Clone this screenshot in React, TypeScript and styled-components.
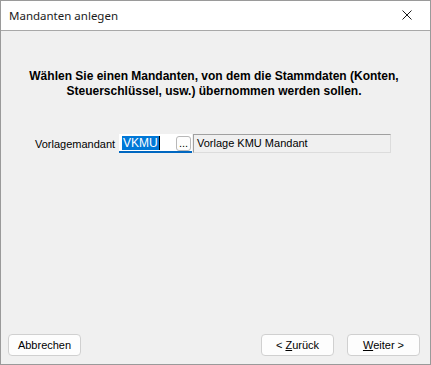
import React from "react";
import styled, { createGlobalStyle } from "styled-components";

const GlobalStyle = createGlobalStyle`
  html, body {
    margin: 0;
    padding: 0;
    background: #ffffff;
  }
  * {
    box-sizing: border-box;
  }
`;

function App() {
  return (
    <>
      <GlobalStyle />
      <Window>
        <TitleBar>
          <Title>Mandanten anlegen</Title>
          <CloseButton aria-label="Schließen">
            <svg width="10" height="10" viewBox="0 0 10 10">
              <path d="M0.5 0.5 L9.5 9.5 M9.5 0.5 L0.5 9.5" stroke="#1a1a1a" strokeWidth="1" />
            </svg>
          </CloseButton>
        </TitleBar>
        <Body>
          <Heading>
            Wählen Sie einen Mandanten, von dem die Stammdaten (Konten,
            <br />
            Steuerschlüssel, usw.) übernommen werden sollen.
          </Heading>
          <FieldRow>
            <Label>Vorlagemandant</Label>
            <CodeInput>
              <Selected>VKMU</Selected>
              <Caret />
              <BrowseButton>...</BrowseButton>
            </CodeInput>
            <NameField>Vorlage KMU Mandant</NameField>
          </FieldRow>
          <Spacer />
          <Footer>
            <Button>Abbrechen</Button>
            <NavGroup>
              <Button>
                &lt; <u>Z</u>urück
              </Button>
              <Button>
                <u>W</u>eiter &gt;
              </Button>
            </NavGroup>
          </Footer>
        </Body>
      </Window>
    </>
  );
}

export default App;

const Window = styled.div`
  width: 431px;
  height: 365px;
  border: 1px solid #9a9a9a;
  display: flex;
  flex-direction: column;
  background: #f0f0f0;
  font-family: "Liberation Sans", Arial, sans-serif;
  color: #000;
`;

const TitleBar = styled.div`
  height: 30px;
  flex: none;
  background: #ffffff;
  border-bottom: 1px solid #a8a8a8;
  display: flex;
  align-items: center;
  justify-content: space-between;
  padding: 0 0 1px 8px;
`;

const Title = styled.div`
  font-family: "Noto Sans", "Open Sans", sans-serif;
  font-size: 11.5px;
  color: #1b1b1b;
`;

const CloseButton = styled.div`
  width: 46px;
  height: 29px;
  display: flex;
  align-items: center;
  justify-content: center;
`;

const Body = styled.div`
  flex: 1;
  display: flex;
  flex-direction: column;
  padding: 38px 10px 8px 7px;
`;

const Heading = styled.div`
  font-size: 12px;
  font-weight: bold;
  text-align: center;
  line-height: 15px;
  color: #000;
`;

const FieldRow = styled.div`
  display: flex;
  align-items: center;
  margin-top: 35px;
  padding-left: 27px;
`;

const Label = styled.div`
  font-size: 11px;
  width: 84px;
`;

const CodeInput = styled.div`
  position: relative;
  width: 73px;
  height: 19px;
  background: #ffffff;
  border-bottom: 2px solid #0067c0;
  display: flex;
  align-items: center;
  padding-left: 3px;
`;

const Selected = styled.span`
  background: #0078d7;
  color: #ffffff;
  font-size: 12px;
  line-height: 14px;
  padding: 0 1px;
`;

const Caret = styled.span`
  width: 1px;
  height: 14px;
  background: #000;
`;

const BrowseButton = styled.div`
  position: absolute;
  right: 1px;
  top: 2px;
  width: 15px;
  height: 15px;
  border: 1px solid #b8b8b8;
  border-radius: 3px;
  background: #fdfdfd;
  font-size: 11px;
  line-height: 13px;
  text-align: center;
`;

const NameField = styled.div`
  width: 198px;
  height: 19px;
  margin-left: 1px;
  border: 1px solid #dcdcdc;
  border-top-color: #a0a0a0;
  border-left-color: #a0a0a0;
  background: #f0f0f0;
  font-size: 11px;
  line-height: 17px;
  padding-left: 3px;
`;

const Spacer = styled.div`
  flex: 1;
`;

const Footer = styled.div`
  display: flex;
  justify-content: space-between;
  align-items: center;
`;

const NavGroup = styled.div`
  display: flex;
  gap: 13px;
`;

const Button = styled.button`
  width: 73px;
  height: 22px;
  padding: 0;
  background: #fdfdfd;
  border: 1px solid #d0d0d0;
  border-radius: 4px;
  font-family: "Liberation Sans", Arial, sans-serif;
  font-size: 11px;
  color: #000;

  u {
    text-decoration-thickness: 1px;
  }
`;
